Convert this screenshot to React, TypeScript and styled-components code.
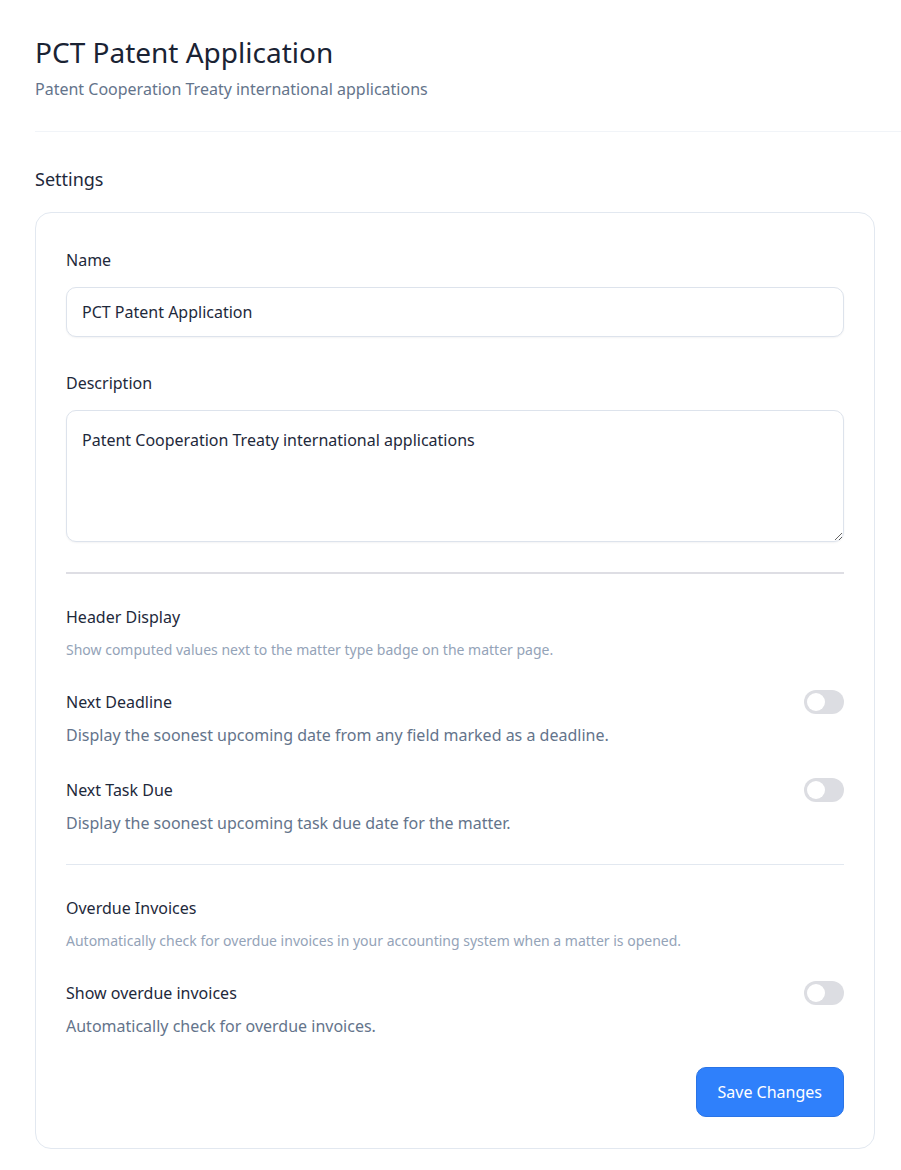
import React from 'react'
import styled, { createGlobalStyle } from 'styled-components'

const GlobalStyle = createGlobalStyle`
  html, body {
    margin: 0;
    padding: 0;
    background: #ffffff;
    font-family: "Segoe UI", "Noto Sans", "Liberation Sans", sans-serif;
    color: #1e293b;
    overflow-x: hidden;
  }
`

const Page = styled.div`
  width: 901px;
  box-sizing: border-box;
  padding: 28px 26px 22px 35px;
`

const Header = styled.header`
  margin-right: -26px;
  padding-bottom: 29px;
  border-bottom: 1px solid #f1f4f8;
`

const Title = styled.h1`
  margin: 0;
  font-size: 28px;
  font-weight: 400;
  line-height: 48px;
  color: #1a2334;
`

const Subtitle = styled.p`
  margin: 0;
  font-size: 16px;
  line-height: 26px;
  color: #64748b;
`

const SectionTitle = styled.h2`
  margin: 33px 0 19px;
  font-size: 18px;
  font-weight: 400;
  line-height: 28px;
  color: #1e293b;
`

const Card = styled.section`
  border: 1px solid #e2e8f0;
  border-radius: 16px;
  padding: 35px 30px 31px;
  display: flex;
  flex-direction: column;
`

const Label = styled.label`
  display: block;
  font-size: 16px;
  line-height: 24px;
  color: #1e293b;
  margin-bottom: 15px;
`

const Field = styled.div<{ $last?: boolean }>`
  margin-bottom: ${p => (p.$last ? '30px' : '34px')};
`

const Input = styled.input`
  box-sizing: border-box;
  width: 100%;
  height: 50px;
  padding: 0 15px;
  border: 1px solid #dde3ec;
  border-radius: 10px;
  font: inherit;
  font-size: 16px;
  color: #1e293b;
  box-shadow: 0 1px 2px rgba(15, 23, 42, 0.05);
  outline: none;
`

const TextArea = styled.textarea`
  box-sizing: border-box;
  display: block;
  width: 100%;
  height: 132px;
  padding: 17px 15px;
  border: 1px solid #dde3ec;
  border-radius: 10px;
  font: inherit;
  font-size: 16px;
  line-height: 24px;
  color: #1e293b;
  box-shadow: 0 1px 2px rgba(15, 23, 42, 0.05);
  resize: vertical;
  outline: none;
`

const Divider = styled.hr<{ $thick?: boolean }>`
  margin: 0 0 31px;
  border: none;
  height: ${p => (p.$thick ? '2px' : '1px')};
  background: ${p => (p.$thick ? '#dedee4' : '#e2e8f0')};
`

const GroupTitle = styled.div`
  font-size: 16px;
  line-height: 24px;
  color: #1e293b;
`

const GroupHint = styled.div`
  margin-top: 12px;
  font-size: 14px;
  line-height: 18px;
  color: #94a3b8;
`

const ToggleRow = styled.div<{ $last?: boolean }>`
  display: flex;
  align-items: flex-start;
  justify-content: space-between;
  margin-top: 31px;
  margin-bottom: ${p => (p.$last ? '29px' : '0')};
`

const ToggleText = styled.div`
  display: flex;
  flex-direction: column;
  gap: 9px;
`

const ToggleLabel = styled.div`
  font-size: 16px;
  line-height: 24px;
  color: #1e293b;
`

const ToggleHint = styled.div`
  font-size: 16px;
  line-height: 24px;
  color: #64748b;
`

const Switch = styled.button<{ $on?: boolean }>`
  position: relative;
  flex: none;
  width: 40px;
  height: 24px;
  padding: 0;
  border: none;
  border-radius: 12px;
  background: ${p => (p.$on ? '#2f80fb' : '#dcdde2')};
  cursor: pointer;

  &::after {
    content: '';
    position: absolute;
    top: 3px;
    left: ${p => (p.$on ? '19px' : '3px')};
    width: 18px;
    height: 18px;
    border-radius: 50%;
    background: #ffffff;
  }
`

const Section = styled.div<{ $spaced?: boolean }>`
  margin-bottom: ${p => (p.$spaced ? '29px' : '0')};
`

const Footer = styled.div`
  display: flex;
  justify-content: flex-end;
`

const PrimaryButton = styled.button`
  height: 50px;
  padding: 0 21px;
  border: 1px solid #2a74e6;
  border-radius: 10px;
  background: #2f80fb;
  color: #ffffff;
  font: inherit;
  font-size: 16px;
  cursor: pointer;
`

const Toggle = ({ label, hint, last }: { label: string; hint: string; last?: boolean }) => (
  <ToggleRow $last={last}>
    <ToggleText>
      <ToggleLabel>{label}</ToggleLabel>
      <ToggleHint>{hint}</ToggleHint>
    </ToggleText>
    <Switch type="button" aria-label={label} />
  </ToggleRow>
)

export default function App() {
  return (
    <>
      <GlobalStyle />
      <Page>
        <Header>
          <Title>PCT Patent Application</Title>
          <Subtitle>Patent Cooperation Treaty international applications</Subtitle>
        </Header>

        <SectionTitle>Settings</SectionTitle>

        <Card>
          <Field>
            <Label>Name</Label>
            <Input defaultValue="PCT Patent Application" />
          </Field>
          <Field $last>
            <Label>Description</Label>
            <TextArea defaultValue="Patent Cooperation Treaty international applications" />
          </Field>

          <Divider $thick />

          <Section $spaced>
            <GroupTitle>Header Display</GroupTitle>
            <GroupHint>Show computed values next to the matter type badge on the matter page.</GroupHint>
            <Toggle
              label="Next Deadline"
              hint="Display the soonest upcoming date from any field marked as a deadline."
            />
            <Toggle label="Next Task Due" hint="Display the soonest upcoming task due date for the matter." />
          </Section>

          <Divider />

          <Section>
            <GroupTitle>Overdue Invoices</GroupTitle>
            <GroupHint>
              Automatically check for overdue invoices in your accounting system when a matter is opened.
            </GroupHint>
            <Toggle label="Show overdue invoices" hint="Automatically check for overdue invoices." last />
          </Section>

          <Footer>
            <PrimaryButton type="button">Save Changes</PrimaryButton>
          </Footer>
        </Card>
      </Page>
    </>
  )
}
